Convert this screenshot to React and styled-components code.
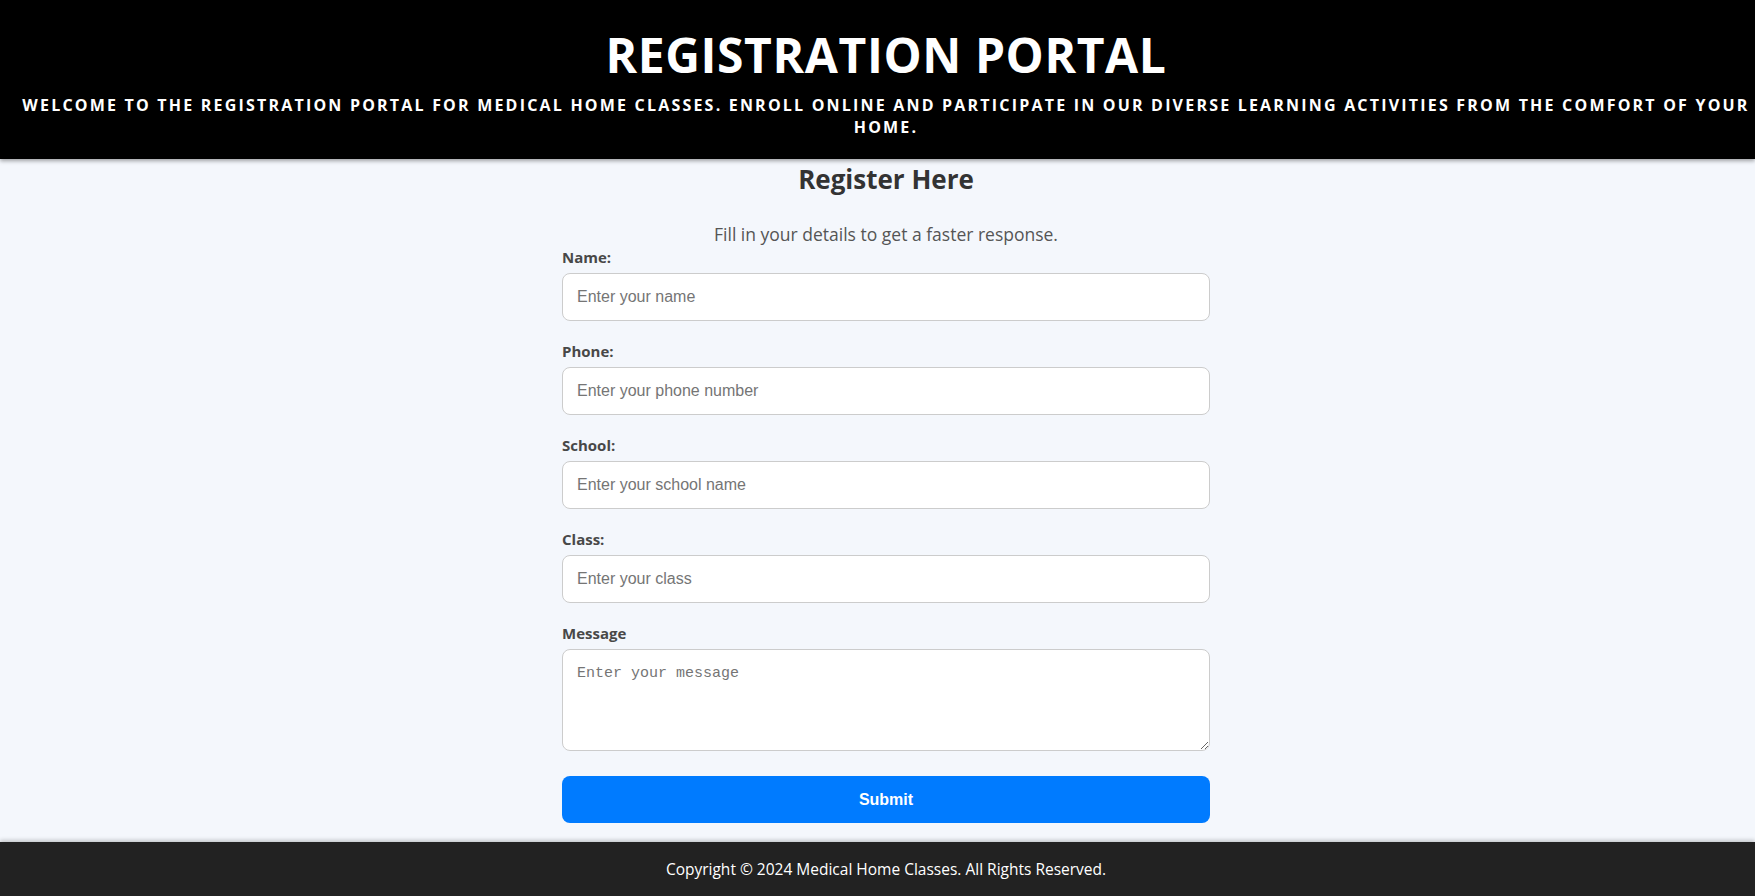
import styled, { createGlobalStyle } from "styled-components";

const GlobalStyle = createGlobalStyle`
    body {
        margin: 0;
        background-color: #f4f7fc;
        font-family: "Open Sans", "Noto Sans", sans-serif;
        color: #333;
    }
`

const Header = styled.header`
    background-color: #000;
    color: #fff;
    text-align: center;
    padding: 24px 0 21px 17px;
    box-shadow: 0 2px 4px rgba(0, 0, 0, 0.35);
`
const Title = styled.h1`
    margin: 0 0 8px 0;
    font-size: 48px;
    line-height: 62px;
    font-weight: 700;
    letter-spacing: 0.6px;
`
const Tagline = styled.p`
    margin: 0;
    font-size: 16px;
    line-height: 22px;
    font-weight: 700;
    letter-spacing: 2.2px;
    text-transform: uppercase;
`

const Main = styled.main`
    display: flex;
    flex-direction: column;
    align-items: center;
    padding: 4px 0 19px 17px;
`
const Heading = styled.h2`
    margin: 0;
    font-size: 26px;
    line-height: 32px;
    font-weight: 700;
    color: #333;
`
const Intro = styled.p`
    margin: 26px 0 0 0;
    font-size: 17.5px;
    line-height: 26px;
    color: #555;
`

const Form = styled.form`
    width: 648px;
    display: flex;
    flex-direction: column;
`
const Field = styled.div`
    display: flex;
    flex-direction: column;
    gap: 6px;
    margin-bottom: ${p => p.$last ? "25px" : "20px"};
`
const Label = styled.label`
    font-size: 15px;
    line-height: 20px;
    font-weight: 700;
    color: #484848;
`
const Input = styled.input`
    box-sizing: border-box;
    width: 100%;
    height: 48px;
    padding: 0 14px;
    border: 1px solid #ccc;
    border-radius: 8px;
    background: #fff;
    font-family: "Liberation Sans", Arial, sans-serif;
    font-size: 16px;
    &::placeholder {
        color: #757575;
    }
`
const TextArea = styled.textarea`
    box-sizing: border-box;
    width: 100%;
    height: 102px;
    padding: 15px 14px 12px;
    border: 1px solid #ccc;
    border-radius: 8px;
    background: #fff;
    font-family: "Liberation Mono", monospace;
    font-size: 15px;
    display: block;
    &::placeholder {
        color: #757575;
    }
`
const SubmitBtn = styled.button`
    height: 47px;
    border: 0;
    border-radius: 8px;
    background-color: #007bff;
    color: #fff;
    font-family: "Liberation Sans", Arial, sans-serif;
    font-size: 16px;
    font-weight: 700;
    cursor: pointer;
`

const Footer = styled.footer`
    background-color: #222;
    color: #fff;
    text-align: center;
    height: 54px;
    display: flex;
    align-items: center;
    justify-content: center;
    padding-left: 17px;
    font-size: 15.5px;
    box-shadow: 0 -2px 4px rgba(0, 0, 0, 0.2);
`

const fields = [
    { id: "name", label: "Name:", placeholder: "Enter your name" },
    { id: "phone", label: "Phone:", placeholder: "Enter your phone number" },
    { id: "school", label: "School:", placeholder: "Enter your school name" },
    { id: "class", label: "Class:", placeholder: "Enter your class" },
]

export default function App() {
    return <>
        <GlobalStyle />
        <Header>
            <Title>REGISTRATION PORTAL</Title>
            <Tagline>
                Welcome to the registration portal for medical home classes. Enroll online and participate in our diverse learning activities from the comfort of your home.
            </Tagline>
        </Header>
        <Main>
            <Heading>Register Here</Heading>
            <Intro>Fill in your details to get a faster response.</Intro>
            <Form onSubmit={e => e.preventDefault()}>
                {fields.map(f => (
                    <Field key={f.id}>
                        <Label htmlFor={f.id}>{f.label}</Label>
                        <Input id={f.id} type="text" placeholder={f.placeholder} />
                    </Field>
                ))}
                <Field $last>
                    <Label htmlFor="message">Message</Label>
                    <TextArea id="message" placeholder="Enter your message" />
                </Field>
                <SubmitBtn type="submit">Submit</SubmitBtn>
            </Form>
        </Main>
        <Footer>Copyright © 2024 Medical Home Classes. All Rights Reserved.</Footer>
    </>
}
